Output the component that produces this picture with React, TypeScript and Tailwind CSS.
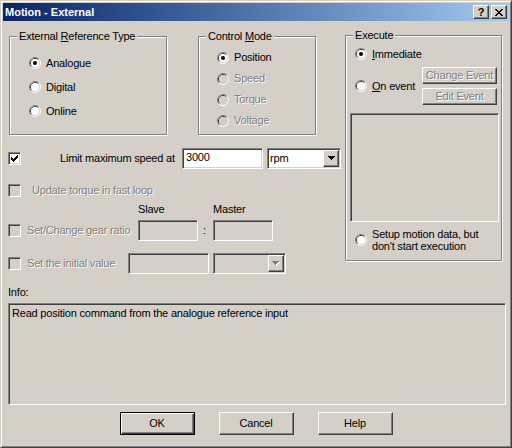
import React from 'react';

const raised =
  'border border-t-white border-l-white border-r-[#404040] border-b-[#404040] shadow-[inset_-1px_-1px_0_#808080]';
const sunken =
  'border border-t-[#808080] border-l-[#808080] border-r-white border-b-white shadow-[inset_1px_1px_0_#404040,inset_-1px_-1px_0_#d4d0c8]';
const dim = 'text-[#808080] [text-shadow:1px_1px_0_#fff]';

const CHECK = ['......X', '.....XX', 'X...XXX', 'XX.XXX.', 'XXXXX..', '.XXX...', '..X....'];
const CLOSE = ['XX....XX', '.XX..XX.', '..XXXX..', '...XX...', '..XXXX..', '.XX..XX.', 'XX....XX'];
const ARROW = ['XXXXXXX', '.XXXXX.', '..XXX..', '...X...'];

function Pixels({ rows, color = '#000', shadow = false }: { rows: string[]; color?: string; shadow?: boolean }) {
  const w = rows[0].length + (shadow ? 1 : 0);
  const h = rows.length + (shadow ? 1 : 0);
  const cells: { x: number; y: number }[] = [];
  rows.forEach((r, y) => r.split('').forEach((c, x) => c === 'X' && cells.push({ x, y })));
  return (
    <svg width={w} height={h} viewBox={`0 0 ${w} ${h}`} shapeRendering="crispEdges" className="shrink-0">
      {shadow && cells.map((p) => <rect key={`s${p.x}-${p.y}`} x={p.x + 1} y={p.y + 1} width={1} height={1} fill="#fff" />)}
      {cells.map((p) => <rect key={`${p.x}-${p.y}`} x={p.x} y={p.y} width={1} height={1} fill={color} />)}
    </svg>
  );
}

function Radio({ checked, disabled }: { checked?: boolean; disabled?: boolean }) {
  return (
    <svg width="12" height="12" viewBox="0 0 12 12" className="shrink-0">
      <path d="M2.11 9.89 A5.5 5.5 0 0 1 9.89 2.11" fill="none" stroke="#808080" />
      <path d="M9.89 2.11 A5.5 5.5 0 0 1 2.11 9.89" fill="none" stroke="#fff" />
      <path d="M2.82 9.18 A4.5 4.5 0 0 1 9.18 2.82" fill="none" stroke="#404040" />
      <path d="M9.18 2.82 A4.5 4.5 0 0 1 2.82 9.18" fill="none" stroke="#d4d0c8" />
      <circle cx="6" cy="6" r="4" fill={disabled ? '#d4d0c8' : '#fff'} />
      {checked && <circle cx="6" cy="6" r="2" fill="#000" />}
    </svg>
  );
}

function Check({ checked, disabled }: { checked?: boolean; disabled?: boolean }) {
  return (
    <div
      className={`w-[13px] h-[13px] shrink-0 flex items-center justify-center ${sunken} ${
        disabled ? 'bg-[#d4d0c8]' : 'bg-white'
      }`}
    >
      {checked && <Pixels rows={CHECK} />}
    </div>
  );
}

function Group({ label, className, children }: { label: React.ReactNode; className: string; children: React.ReactNode }) {
  return (
    <fieldset className={`border border-[#808080] shadow-[inset_1px_1px_0_#fff,1px_1px_0_#fff] ${className}`}>
      <legend className="ml-[7px] px-[2px] leading-[13px] bg-[#d4d0c8]">{label}</legend>
      {children}
    </fieldset>
  );
}

function Combo({ value, disabled, className }: { value?: string; disabled?: boolean; className: string }) {
  return (
    <div className={`h-[21px] flex items-stretch ${sunken} ${disabled ? 'bg-[#d4d0c8]' : 'bg-white'} ${className}`}>
      <span className="flex-1 pl-[2px] pt-[3px]">{value}</span>
      <div className={`w-[16px] my-[1px] mr-[1px] flex items-center justify-center bg-[#d4d0c8] ${raised}`}>
        {disabled ? <Pixels rows={ARROW} color="#808080" shadow /> : <Pixels rows={ARROW} />}
      </div>
    </div>
  );
}

function Button({ children, primary, className = '' }: { children: React.ReactNode; primary?: boolean; className?: string }) {
  return (
    <div
      className={`flex items-center justify-center ${
        primary
          ? 'border border-black shadow-[inset_1px_1px_0_#fff,inset_-1px_-1px_0_#404040,inset_-2px_-2px_0_#808080]'
          : raised
      } ${className}`}
    >
      {children}
    </div>
  );
}

export default function App() {
  return (
    <div className="w-[512px] h-[448px] bg-[#d4d0c8] font-['Liberation_Sans',Arial,sans-serif] text-[11px] leading-[13px] tracking-[-0.2px] text-black border border-t-[#d4d0c8] border-l-[#d4d0c8] border-r-[#404040] border-b-[#404040] shadow-[inset_1px_1px_0_#fff,inset_-1px_-1px_0_#808080] p-[2px] flex flex-col">
      {/* title bar */}
      <div className="h-[18px] shrink-0 flex items-center px-[2px] bg-gradient-to-r from-[#0a246a] to-[#a6caf0] tracking-normal">
        <span className="flex-1 font-bold text-white">Motion - External</span>
        <div className="flex gap-[2px]">
          <div className={`w-[16px] h-[14px] bg-[#d4d0c8] flex items-center justify-center font-bold ${raised}`}>?</div>
          <div className={`w-[16px] h-[14px] bg-[#d4d0c8] flex items-center justify-center ${raised}`}>
            <Pixels rows={CLOSE} />
          </div>
        </div>
      </div>

      <div className="flex items-start">
        <div className="w-[340px] flex flex-col">
          <div className="flex mt-[9px] ml-[6px]">
            <Group
              className="w-[158px] h-[105px]"
              label={
                <>
                  External <u>R</u>eference Type
                </>
              }
            >
              <div className="flex flex-col pl-[19px] pt-[8px]">
                <div className="h-[24px] flex items-center gap-[5px]">
                  <Radio checked />
                  <span>Analogue</span>
                </div>
                <div className="h-[24px] flex items-center gap-[5px]">
                  <Radio />
                  <span>Digital</span>
                </div>
                <div className="h-[24px] flex items-center gap-[5px]">
                  <Radio />
                  <span>Online</span>
                </div>
              </div>
            </Group>
            <Group
              className="w-[118px] h-[105px] ml-[31px]"
              label={
                <>
                  Control <u>M</u>ode
                </>
              }
            >
              <div className="flex flex-col pl-[18px] pt-[4px]">
                <div className="h-[21px] flex items-center gap-[5px]">
                  <Radio checked />
                  <span>Position</span>
                </div>
                <div className="h-[21px] flex items-center gap-[5px]">
                  <Radio disabled />
                  <span className={dim}>Speed</span>
                </div>
                <div className="h-[21px] flex items-center gap-[5px]">
                  <Radio disabled />
                  <span className={dim}>Torque</span>
                </div>
                <div className="h-[21px] flex items-center gap-[5px]">
                  <Radio disabled />
                  <span className={dim}>Voltage</span>
                </div>
              </div>
            </Group>
          </div>

          {/* limit speed */}
          <div className="mt-[12px] h-[22px] pl-[5px] flex items-center">
            <Check checked />
            <span className="ml-[39px] w-[122px]">Limit maximum speed at</span>
            <div className={`w-[81px] h-[21px] bg-white pl-[3px] pt-[2px] ${sunken}`}>3000</div>
            <Combo value="rpm" className="w-[74px] ml-[4px]" />
          </div>

          <div className="mt-[13px] h-[16px] pl-[5px] flex items-center">
            <Check disabled />
            <span className={`ml-[11px] ${dim}`}>Update torque in fast loop</span>
          </div>

          <div className="mt-[5px] h-[13px] pl-[135px] flex">
            <span className="w-[75px]">Slave</span>
            <span>Master</span>
          </div>

          <div className="mt-[4px] h-[21px] pl-[5px] flex items-center">
            <Check disabled />
            <span className={`ml-[6px] w-[111px] ${dim}`}>Set/Change gear ratio</span>
            <div className={`w-[60px] h-[21px] bg-[#d4d0c8] ${sunken}`} />
            <span className="w-[15px] pl-[5px]">:</span>
            <div className={`w-[60px] h-[21px] bg-[#d4d0c8] ${sunken}`} />
          </div>

          <div className="mt-[12px] h-[21px] pl-[5px] flex items-center">
            <Check disabled />
            <span className={`ml-[6px] w-[101px] ${dim}`}>Set the initial value</span>
            <div className={`w-[81px] h-[21px] bg-[#d4d0c8] ${sunken}`} />
            <Combo disabled className="w-[73px] ml-[4px]" />
          </div>
        </div>

        {/* execute */}
        <Group className="w-[157px] h-[232px] ml-[2px] mt-[8px]" label="Execute">
          <div className="flex flex-col">
            <div className="mt-[4px] h-[16px] pl-[9px] flex items-center gap-[5px]">
              <Radio checked />
              <span>
                <u>I</u>mmediate
              </span>
            </div>
            <div className="mt-[5px] flex items-center">
              <div className="w-[76px] pl-[9px] flex items-center gap-[5px]">
                <Radio />
                <span>
                  <u>O</u>n event
                </span>
              </div>
              <div className="flex flex-col gap-[4px]">
                <Button className={`w-[75px] h-[17px] ${dim}`}>Change Event</Button>
                <Button className={`w-[75px] h-[17px] ${dim}`}>Edit Event</Button>
              </div>
            </div>
            <div className={`mt-[8px] ml-[4px] w-[149px] h-[109px] bg-[#d4d0c8] ${sunken}`} />
            <div className="mt-[6px] pl-[9px] flex items-center gap-[5px]">
              <Radio />
              <span className="leading-[12px]">
                Setup motion data, but
                <br />
                don't start execution
              </span>
            </div>
          </div>
        </Group>
      </div>

      <div className="mt-[12px] ml-[5px] h-[13px]">Info:</div>
      <div className={`mt-[4px] ml-[5px] w-[498px] h-[102px] bg-[#d4d0c8] pl-[3px] pt-[3px] ${sunken}`}>
        Read position command from the analogue reference input
      </div>

      <div className="mt-[7px] flex justify-center gap-[24px]">
        <Button primary className="w-[75px] h-[23px]">
          OK
        </Button>
        <Button className="w-[75px] h-[23px]">Cancel</Button>
        <Button className="w-[75px] h-[23px]">Help</Button>
      </div>
    </div>
  );
}
